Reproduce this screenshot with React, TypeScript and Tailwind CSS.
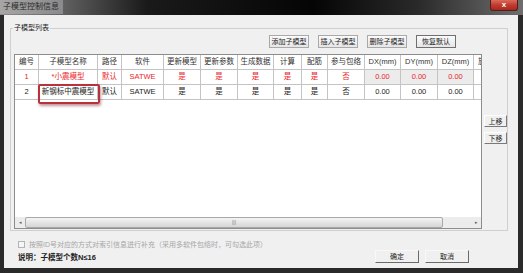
import React from "react";

const font = "font-['Liberation_Sans','Noto_Sans_CJK_SC',sans-serif]";

const headers = [
  "编号",
  "子模型名称",
  "路径",
  "软件",
  "更新模型",
  "更新参数",
  "生成数据",
  "计算",
  "配筋",
  "参与包络",
  "DX(mm)",
  "DY(mm)",
  "DZ(mm)",
  "旋转",
];

const rows = [
  {
    red: true,
    cells: ["1", "*小震模型", "默认", "SATWE", "是", "是", "是", "是", "是", "否", "0.00", "0.00", "0.00", ""],
  },
  {
    red: false,
    cells: ["2", "新钢标中震模型", "默认", "SATWE", "是", "是", "是", "是", "是", "否", "0.00", "0.00", "0.00", ""],
  },
];

const gridCols =
  "grid grid-cols-[24px_59px_24px_42px_37px_37px_36px_28px_26px_37px_36px_37px_36px_24px]";

function TopButton({ label, strong }: { label: string; strong?: boolean }) {
  return (
    <button
      className={`h-[13px] w-[40px] border ${
        strong ? "border-[#6f6f6f]" : "border-[#a9a9a9]"
      } bg-gradient-to-b from-[#fbfbfb] to-[#e6e6e6] text-[7px] leading-none text-[#222]`}
    >
      {label}
    </button>
  );
}

function SideButton({ label }: { label: string }) {
  return (
    <button className="h-[12px] w-[23px] border border-t-white border-l-white border-r-[#7a7a7a] border-b-[#7a7a7a] bg-[#f0f0f0] text-[7px] leading-none text-[#222]">
      {label}
    </button>
  );
}

function BottomButton({ label }: { label: string }) {
  return (
    <button className="h-[13px] w-[44px] border border-t-[#f8f8f8] border-l-[#f8f8f8] border-r-[#6a6a6a] border-b-[#6a6a6a] bg-[#f0f0f0] text-[7px] leading-none text-[#222]">
      {label}
    </button>
  );
}

function Table() {
  return (
    <div className="relative flex h-[175px] w-[468px] flex-col overflow-hidden border border-[#8c8c8c] bg-white">
      <div className={`${gridCols} h-[15px] border-b border-[#c4c4c4]`}>
        {headers.map((h, i) => (
          <div
            key={i}
            className="flex items-center justify-center overflow-hidden whitespace-nowrap border-r border-[#c4c4c4] text-[7.5px] text-[#333]"
          >
            {h}
          </div>
        ))}
      </div>
      {rows.map((r, ri) => (
        <div key={ri} className={`${gridCols} h-[15px] border-b border-[#c4c4c4]`}>
          {r.cells.map((c, ci) => (
            <div
              key={ci}
              className={`flex items-center justify-center overflow-hidden whitespace-nowrap border-r border-[#c4c4c4] text-[7.5px] ${
                r.red ? "text-[#e8262c]" : "text-[#222]"
              } ${r.red && ci >= 10 && ci <= 12 ? "bg-[#ececec]" : ""} ${
                ci === 13 ? "border-r-0" : ""
              }`}
            >
              {c}
            </div>
          ))}
        </div>
      ))}
      <div className="flex-1" />
      {/* horizontal scrollbar */}
      <div className="flex h-[11px] items-stretch bg-[#ececec]">
        <div className="flex w-[10px] items-center justify-center text-[5px] text-[#666]">◂</div>
        <div className="flex w-[418px] items-center justify-center rounded-[2px] border border-[#a8a8a8] bg-gradient-to-b from-[#f4f4f4] to-[#d6d6d6] text-[5px] leading-none text-[#777]">
          |||
        </div>
        <div className="flex-1" />
        <div className="flex w-[10px] items-center justify-center text-[5px] text-[#666]">▸</div>
      </div>
      {/* annotation box */}
      <div className="absolute left-[23px] top-[29px] h-[20px] w-[62px] rounded-[2px] border-2 border-[#b8323d] shadow-[1px_2px_3px_rgba(120,20,30,0.45)]" />
    </div>
  );
}

export default function App() {
  return (
    <div className={`flex h-[273px] w-[523px] flex-col bg-[#2a2a2a] ${font}`}>
      {/* title bar */}
      <div className="flex h-[15px] items-start justify-between bg-[linear-gradient(90deg,#8e8e8e_0%,#6a6a6a_10%,#1a1a1a_28%,#050505_60%,#2a2a2a_80%,#6e6e6e_100%)]">
        <div className="flex h-[14px] items-center bg-gradient-to-r from-[#a6a6a6] to-[#8a8a8a] pl-[3px] pr-[4px] text-[8px] text-[#2a2a2a]">
          子模型控制信息
        </div>
        <div className="mr-[5px] flex h-[11px] w-[28px] items-center justify-center rounded-b-[3px] border border-t-0 border-[#5a1a1a] bg-gradient-to-b from-[#d86a5a] via-[#c23a2e] to-[#a52a22] text-[8px] font-bold leading-none text-white">
          x
        </div>
      </div>
      {/* client */}
      <div className="ml-[4px] mr-[5px] flex h-[253px] flex-col bg-[#f0f0f0] pl-[6px] pr-[10px] pt-[13px]">
        {/* group box */}
        <div className="relative flex h-[203px] flex-col border border-[#cfcfcf] pl-[3px] pt-[6px]">
          <div className="absolute -top-[6px] left-[2px] bg-[#f0f0f0] px-[1px] text-[7px] leading-[10px] text-[#222]">
            子模型列表
          </div>
          <div className="flex justify-end gap-[9px] pr-[51px]">
            <TopButton label="添加子模型" />
            <TopButton label="插入子模型" />
            <TopButton label="删除子模型" />
            <TopButton label="恢复默认" strong />
          </div>
          <div className="mt-[6px] flex gap-[2px]">
            <Table />
            <div className="flex flex-col gap-[5px] pt-[61px]">
              <SideButton label="上移" />
              <SideButton label="下移" />
            </div>
          </div>
        </div>
        {/* bottom area */}
        <div className="flex flex-1 justify-between">
          <div className="flex flex-col pl-[8px] pt-[9px]">
            <div className="flex h-[9px] items-center gap-[4px]">
              <div className="h-[7px] w-[7px] border border-[#b4b4b4] bg-[#f6f6f6]" />
              <span className="text-[7px] leading-none text-[#a6a6a6]">
                按照ID号对应的方式对索引信息进行补充（采用多软件包络时，可勾选此项）
              </span>
            </div>
            <div className="mt-[5px] text-[7.5px] font-bold leading-none text-[#222]">
              说明：子模型个数N≤16
            </div>
          </div>
          <div className="flex gap-[6px] pr-[39px] pt-[19px]">
            <BottomButton label="确定" />
            <BottomButton label="取消" />
          </div>
        </div>
      </div>
    </div>
  );
}
